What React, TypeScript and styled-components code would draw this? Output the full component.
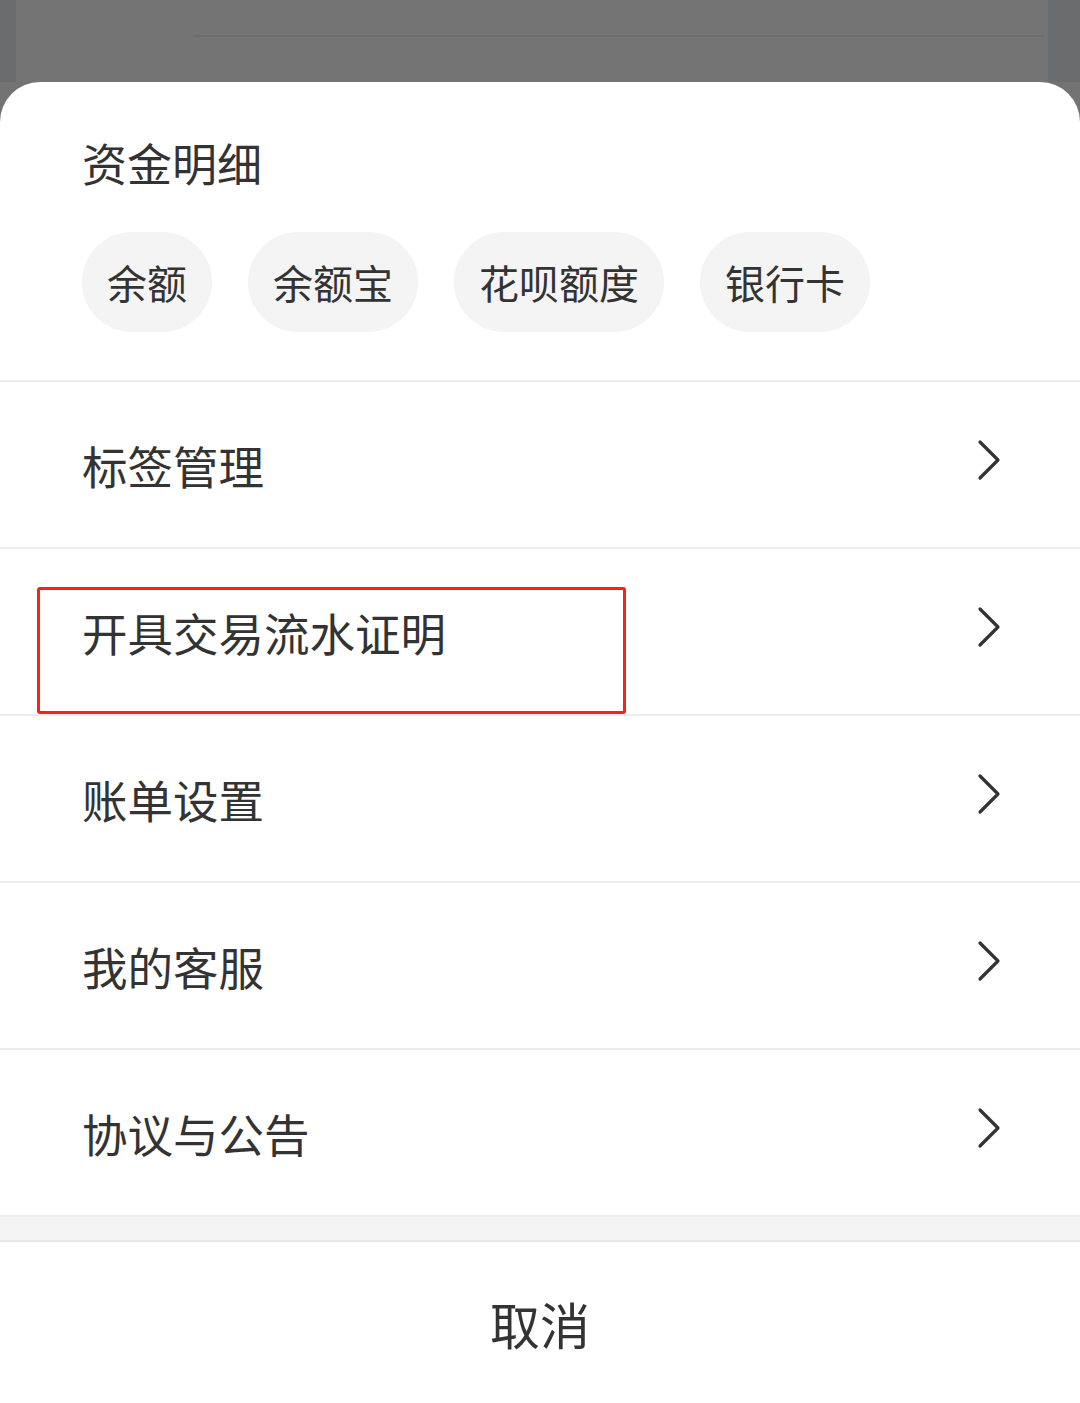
import styled, { createGlobalStyle } from "styled-components";

const GlobalStyle = createGlobalStyle`
    html, body {
        margin: 0;
        padding: 0;
        background: #737373;
        font-family: "Noto Sans CJK SC", "Noto Sans", sans-serif;
    }
    * { box-sizing: border-box; }
`

const chips = ["余额", "余额宝", "花呗额度", "银行卡"]
const rows = ["标签管理", "开具交易流水证明", "账单设置", "我的客服", "协议与公告"]

const Chevron = () => (
    <svg width="26" height="44" viewBox="0 0 26 44" fill="none">
        <path d="M4 3 L22 21 L4 39" stroke="#333" strokeWidth="3.2" strokeLinecap="round" strokeLinejoin="round" />
    </svg>
)

export default function App() {
    return (
        <Page>
            <GlobalStyle />
            <Backdrop>
                <Strip />
                <BackCard>
                    <BackLine />
                </BackCard>
                <Strip />
            </Backdrop>
            <Sheet>
                <Header>
                    <Title>资金明细</Title>
                    <Chips>
                        {chips.map(c => <Chip key={c}>{c}</Chip>)}
                    </Chips>
                </Header>
                {rows.map((r, i) => (
                    <Row key={r}>
                        <RowText>{r}</RowText>
                        <Chevron />
                        {i === 1 && <Highlight />}
                    </Row>
                ))}
                <Gap />
                <Cancel>取消</Cancel>
            </Sheet>
        </Page>
    )
}

const Page = styled.div`
    width: 1080px;
    min-height: 1403px;
    display: flex;
    flex-direction: column;
    background: #737373;
`

const Backdrop = styled.div`
    height: 82px;
    display: flex;
`

const Strip = styled.div`
    width: 32px;
    background: #6b6c6d;
    &:first-child { width: 16px; }
`

const BackCard = styled.div`
    flex: 1;
    background: #747474;
    padding: 35px 4px 0 177px;
`

const BackLine = styled.div`
    height: 2px;
    background: #6c6c6c;
`

const Sheet = styled.div`
    flex: 1;
    background: #fff;
    border-radius: 40px 40px 0 0;
    display: flex;
    flex-direction: column;
    position: relative;
`

const Header = styled.div`
    padding: 58px 82px 48px;
    border-bottom: 2px solid #ededed;
`

const Title = styled.div`
    font-size: 45px;
    line-height: 46px;
    color: #333;
    margin-bottom: 46px;
`

const Chips = styled.div`
    display: flex;
    gap: 36px;
`

const Chip = styled.div`
    height: 100px;
    padding: 0 25px;
    border-radius: 50px;
    background: #f4f4f4;
    display: flex;
    align-items: center;
    font-size: 40px;
    color: #333;
`

const Row = styled.div`
    position: relative;
    height: 167px;
    padding: 0 78px 0 82px;
    display: flex;
    align-items: center;
    justify-content: space-between;
    border-bottom: 2px solid #ededed;
    &:nth-last-of-type(1) { border-bottom: none; }
    svg { margin-top: -8px; }
`

const RowText = styled.div`
    font-size: 45.5px;
    color: #333;
    margin-top: 1px;
`

const Highlight = styled.div`
    position: absolute;
    left: 37px;
    top: 38px;
    width: 589px;
    height: 127px;
    border: 3px solid #ff1f17;
    border-radius: 3px;
`

const Gap = styled.div`
    height: 25px;
    background: #f4f4f4;
    border-bottom: 2px solid #e9e9e9;
`

const Cancel = styled.div`
    height: 162px;
    display: flex;
    align-items: center;
    justify-content: center;
    font-size: 50px;
    color: #333;
`
